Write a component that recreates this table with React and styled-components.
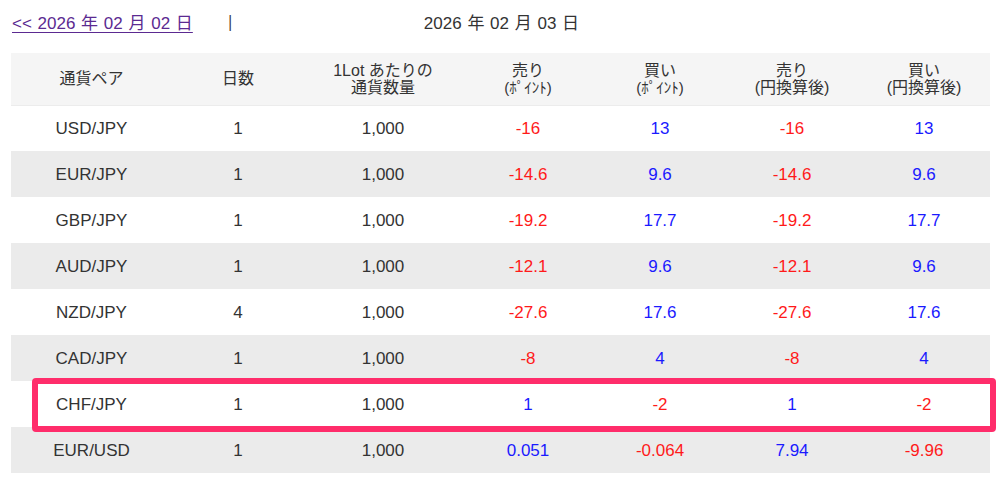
import React from "react";
import styled, { createGlobalStyle } from "styled-components";

const Global = createGlobalStyle`
  html, body { margin: 0; padding: 0; background: #fff; }
  body {
    font-family: "Liberation Sans", "Noto Sans CJK JP", sans-serif;
    color: #333;
  }
`;

const Page = styled.div`
  padding: 7px 10px 0 11px;
  width: 979px;
`;

const DateBar = styled.div`
  display: grid;
  grid-template-columns: 1fr 1fr 1fr;
  align-items: center;
  height: 28px;
  font-size: 17px;
  margin-bottom: 18px;
`;

const Left = styled.div`
  display: flex;
  align-items: center;
  gap: 33px;
`;

const PrevLink = styled.a`
  color: #5b2a91;
  text-decoration: underline;
  text-underline-offset: 3px;
  margin-left: 1px;
  word-spacing: 1px;
`;

const Sep = styled.span`
  color: #333;
  font-family: "Noto Sans", sans-serif;
  font-size: 16px;
`;

const Current = styled.div`
  text-align: center;
  word-spacing: 1px;
  padding-left: 2px;
`;

const TableWrap = styled.div`
  position: relative;
`;

const Table = styled.table`
  width: 979px;
  border-collapse: collapse;
  table-layout: fixed;
`;

const HeadRow = styled.tr`
  background: #f5f5f5;
  height: 52px;
  border-bottom: 1px solid #ececec;
`;

const Th = styled.th`
  font-weight: normal;
  font-size: 16px;
  line-height: 17px;
  color: #333;
  text-align: center;
  vertical-align: middle;
  padding: 0;
`;

const Line = styled.span`
  display: block;
  font-size: ${(p) => (p.$tiny ? "15px" : "16px")};
  line-height: 17px;
`;

const Row = styled.tr`
  height: 46px;
  background: ${(p) => (p.$alt ? "#ebebeb" : "#fff")};
`;

const Td = styled.td`
  text-align: center;
  vertical-align: middle;
  font-size: 17px;
  padding: 2px 0 0;
  color: ${(p) => (p.$tone === "neg" ? "#ff1a1a" : p.$tone === "pos" ? "#1a1aff" : "#333")};
`;

const Highlight = styled.div`
  position: absolute;
  left: 21px;
  top: 325px;
  width: 964px;
  height: 54px;
  box-sizing: border-box;
  border: 6px solid #ff2d6b;
  border-radius: 4px;
  pointer-events: none;
`;

const rows = [
  ["USD/JPY", "1", "-16", "13", "-16", "13"],
  ["EUR/JPY", "1", "-14.6", "9.6", "-14.6", "9.6"],
  ["GBP/JPY", "1", "-19.2", "17.7", "-19.2", "17.7"],
  ["AUD/JPY", "1", "-12.1", "9.6", "-12.1", "9.6"],
  ["NZD/JPY", "4", "-27.6", "17.6", "-27.6", "17.6"],
  ["CAD/JPY", "1", "-8", "4", "-8", "4"],
  ["CHF/JPY", "1", "1", "-2", "1", "-2"],
  ["EUR/USD", "1", "0.051", "-0.064", "7.94", "-9.96"],
];

const tone = (v) => (v.startsWith("-") ? "neg" : "pos");

export default function App() {
  return (
    <>
      <Global />
      <Page>
        <DateBar>
          <Left>
            <PrevLink href="#">&lt;&lt; 2026 年 02 月 02 日</PrevLink>
            <Sep>|</Sep>
          </Left>
          <Current>2026 年 02 月 03 日</Current>
          <div />
        </DateBar>
        <TableWrap>
          <Table>
            <colgroup>
              <col style={{ width: 161 }} />
              <col style={{ width: 132 }} />
              <col style={{ width: 158 }} />
              <col style={{ width: 132 }} />
              <col style={{ width: 132 }} />
              <col style={{ width: 132 }} />
              <col style={{ width: 132 }} />
            </colgroup>
            <thead>
              <HeadRow>
                <Th>通貨ペア</Th>
                <Th>日数</Th>
                <Th>
                  <Line>1Lot あたりの</Line>
                  <Line>通貨数量</Line>
                </Th>
                <Th>
                  <Line>売り</Line>
                  <Line $tiny>(ﾎﾟｲﾝﾄ)</Line>
                </Th>
                <Th>
                  <Line>買い</Line>
                  <Line $tiny>(ﾎﾟｲﾝﾄ)</Line>
                </Th>
                <Th>
                  <Line>売り</Line>
                  <Line>(円換算後)</Line>
                </Th>
                <Th>
                  <Line>買い</Line>
                  <Line>(円換算後)</Line>
                </Th>
              </HeadRow>
            </thead>
            <tbody>
              {rows.map((r, i) => (
                <Row key={r[0]} $alt={i % 2 === 1}>
                  <Td>{r[0]}</Td>
                  <Td>{r[1]}</Td>
                  <Td>1,000</Td>
                  {r.slice(2).map((v, j) => (
                    <Td key={j} $tone={tone(v)}>
                      {v}
                    </Td>
                  ))}
                </Row>
              ))}
            </tbody>
          </Table>
          <Highlight />
        </TableWrap>
      </Page>
    </>
  );
}
